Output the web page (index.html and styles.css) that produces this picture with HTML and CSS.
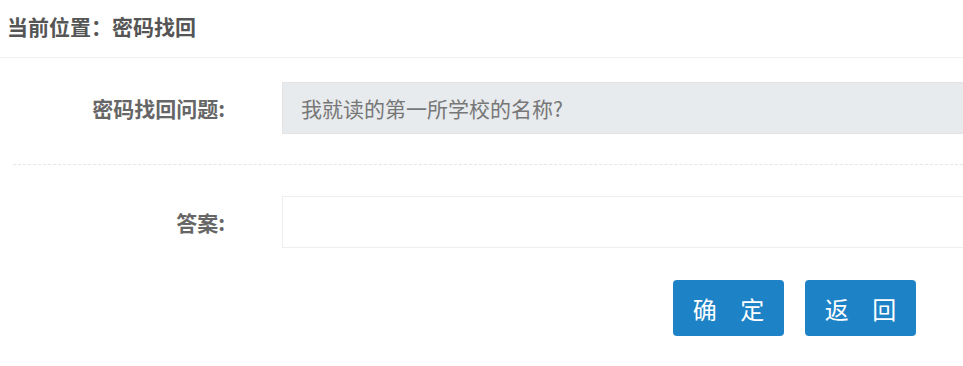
FILE: index.html
```html
<!DOCTYPE html>
<html lang="zh-CN">
<head>
    <meta charset="UTF-8">
    <meta name="viewport" content="width=device-width, initial-scale=1.0">
    <title>密码找回</title>
    <link rel="stylesheet" href="styles.css">
</head>
<body>
    <div class="location">当前位置：密码找回</div>

    <form class="form">
        <div class="row">
            <label class="label">密码找回问题:</label>
            <input type="text" class="field field-disabled" value="我就读的第一所学校的名称?" disabled>
        </div>
        <div class="row row-answer">
            <label class="label">答案:</label>
            <input type="text" class="field">
        </div>
        <div class="actions">
            <button type="button" class="btn">确 定</button>
            <button type="button" class="btn">返 回</button>
        </div>
    </form>
</body>
</html>
```

FILE: styles.css
```css
html, body {
    overflow: hidden;
}

body {
    margin: 0;
    padding: 0;
    background: #fff;
    font-family: "Noto Sans CJK SC", "Microsoft YaHei", sans-serif;
}

.location {
    height: 57px;
    line-height: 53px;
    padding-left: 7px;
    font-size: 21px;
    font-weight: bold;
    color: #555;
    border-bottom: 1px solid #f0f0f0;
}

.form {
    padding-top: 24px;
}

.row {
    display: flex;
    align-items: center;
    margin-left: 13px;
    padding-bottom: 30px;
    border-bottom: 1px dashed #e6e6e6;
}

.row-answer {
    border-bottom: none;
    padding-top: 31px;
    padding-bottom: 32px;
}

.label {
    width: 212px;
    padding-right: 57px;
    text-align: right;
    font-size: 21px;
    font-weight: bold;
    color: #666;
    flex-shrink: 0;
}

.field {
    width: 720px;
    height: 52px;
    box-sizing: border-box;
    flex-shrink: 0;
    padding: 0 18px;
    border: 1px solid #eee;
    background: #fff;
    font-family: inherit;
    font-size: 21px;
    color: #777;
    outline: none;
}

.field-disabled {
    background: #e8ebee;
    border-color: #e4e4e4;
    -webkit-text-fill-color: #777;
    opacity: 1;
}

.actions {
    display: flex;
    gap: 21px;
    padding-left: 673px;
}

.btn {
    width: 111px;
    height: 56px;
    border: none;
    border-radius: 4px;
    background: #1e82c6;
    color: #fff;
    font-family: inherit;
    font-size: 24px;
    letter-spacing: 9px;
    padding: 0 0 0 9px;
    cursor: pointer;
}
```
